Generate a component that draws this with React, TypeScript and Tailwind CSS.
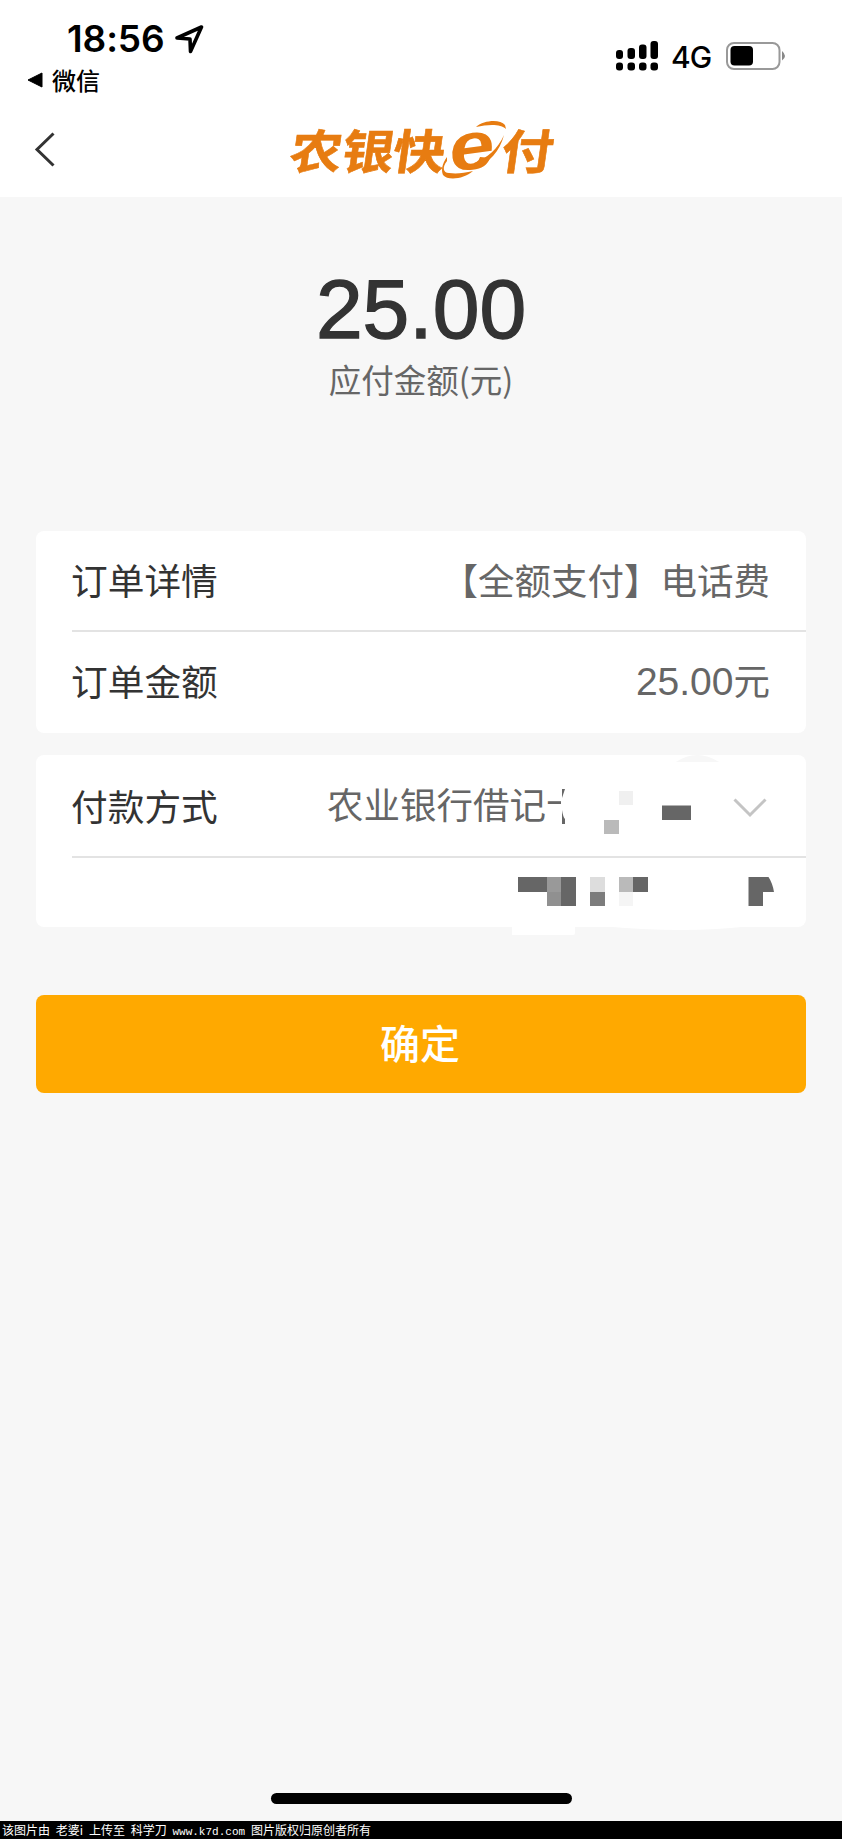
import React from 'react';

type RowProps = {
    label: string;
    children: React.ReactNode;
};

type Cell = [x: number, y: number, w: number, h: number, fill: string];

// Masked card number, coordinates relative to the payment card
const MASK_CELLS: Cell[] = [
    [583, 36, 14, 14, '#f0f0f0'],
    [568, 65, 15, 14, '#bababa'],
    [626, 50.5, 29, 14.5, '#666666'],
    [482, 122, 29, 15, '#666666'],
    [511, 122, 14, 15, '#999999'],
    [511, 137, 14, 14, '#909090'],
    [525, 122, 15, 29, '#666666'],
    [554, 122, 15, 15, '#dddddd'],
    [554, 137, 15, 14, '#7c7c7c'],
    [583, 122, 14, 15, '#bababa'],
    [597, 122, 15, 15, '#666666'],
    [583, 137, 14, 14, '#f5f5f5'],
];

const Row: React.FC<RowProps> = ({ label, children }) => (
    <div className="flex h-[99px] items-center justify-between pr-9 text-[36.5px] leading-none">
        <span className="pb-[2px] text-[36.7px] text-[#333]">{label}</span>
        {children}
    </div>
);

const StatusBar: React.FC = () => (
    <div className="flex h-[100px] justify-between">
        <div className="pl-[27px] pt-[20px]">
            <div className="flex items-center pl-[40px]">
                <span className="font-['Inter'] text-[37px] font-semibold leading-[38px] tracking-[-0.1px]">18:56</span>
                <svg width="29" height="29" viewBox="0 0 29 29" className="ml-[10px]" fill="none" stroke="#000" strokeWidth="3.6" strokeLinejoin="round">
                    <path d="M2 13 26.5 2 15.5 26.5 15 14Z" />
                </svg>
            </div>
            <div className="flex items-center gap-[9px] pt-[8px]">
                <svg width="16" height="16" viewBox="0 0 16 16">
                    <path d="M1 8 15 1v14Z" stroke="#000" strokeLinejoin="round" />
                </svg>
                <span className="text-[24px] font-medium leading-[28px]">微信</span>
            </div>
        </div>
        <div className="mt-[41px] flex h-[30px] pr-[56px]">
            <svg width="43" height="30" viewBox="0 0 43 30">
                <rect x="0" y="9" width="7" height="9" rx="3" />
                <rect x="11.5" y="7" width="7.5" height="11" rx="3" />
                <rect x="23" y="3.5" width="7.5" height="14.5" rx="3" />
                <rect x="34.5" y="0" width="7.5" height="18" rx="3" />
                <rect x="0" y="21.5" width="7" height="8" rx="3" />
                <rect x="11.5" y="21.5" width="7.5" height="8" rx="3" />
                <rect x="23" y="21.5" width="7.5" height="8" rx="3" />
                <rect x="34.5" y="21.5" width="7.5" height="8" rx="3" />
            </svg>
            <span className="ml-[12px] w-[42px] font-['Inter'] text-[30px] font-medium leading-[32px] tracking-[-1px]">4G</span>
            <svg width="60" height="30" viewBox="0 0 60 30" className="ml-[13px]">
                <rect x="1" y="2" width="52.5" height="26" rx="7" fill="none" stroke="#999" strokeWidth="2" />
                <rect x="4.5" y="5" width="22.5" height="19.5" rx="4" />
                <path d="M56 10q6 5 0 9.5Z" fill="#888" />
            </svg>
        </div>
    </div>
);

const Logo: React.FC = () => (
    <svg width="270" height="64" viewBox="0 0 270 64" fill="#e77c11" className="overflow-visible">
        <g transform="translate(0 49) skewX(-8) scale(1.04 0.94)" fontFamily="'Noto Sans CJK SC', sans-serif" fontWeight="700" fontSize="50" stroke="#e77c11" strokeWidth="0.6">
            <text x="2" y="0">农</text>
            <text x="52" y="0">银</text>
            <text x="101" y="0">快</text>
            <text x="205" y="0">付</text>
        </g>
        <text transform="translate(186 31) rotate(-8) scale(1.22 1)" x="0" y="18" textAnchor="middle" fontFamily="'Liberation Sans', sans-serif" fontWeight="700" fontStyle="italic" fontSize="67">e</text>
        {/* Orbit around the letter */}
        <path d="M190 7C198 0 214-1 219 5L220 9C215 4 203 4 190 7Z" />
        <path d="M218 15C214 31 203 43 189 49L188 43C201 38 212 29 218 15Z" />
        <path d="M161 41C156 47 157 53 163 53 171 54 178 53 187 51 178 59 162 61 157 55 155 50 156 44 161 37Z" />
    </svg>
);

const App: React.FC = () => {
    return (
        <div className="flex h-[1839px] w-[842px] flex-col bg-[#f7f7f7] font-['Noto_Sans_CJK_SC',sans-serif] text-black">
            <header className="h-[197px] bg-white">
                <StatusBar />
                <div className="grid h-[97px] grid-cols-[286px_1fr] pt-[20px]">
                    <svg width="22" height="36" viewBox="0 0 22 36" className="ml-[34px] mt-[12px]" fill="none" stroke="#333" strokeWidth="3">
                        <path d="M19.5 1.5 3 17.5 19.5 33.5" />
                    </svg>
                    <Logo />
                </div>
            </header>

            <main className="flex flex-1 flex-col px-9">
                {/* Amount */}
                <div className="flex h-[334px] flex-col items-center pt-[70px]">
                    <p className="font-['Liberation_Sans'] text-[84px] leading-[84px] text-[#333] [-webkit-text-stroke:1.4px_#333]">25.00</p>
                    <p className="pt-[8px] text-[32.5px] leading-[40px] text-[#666]">应付金额(元)</p>
                </div>

                {/* Order info */}
                <section className="h-[202px] rounded-lg bg-white pl-[35px]">
                    <Row label="订单详情">
                        <span className="text-[#666]">【全额支付】电话费</span>
                    </Row>
                    <div className="ml-px h-[2px] bg-[#e3e3e3]" />
                    <Row label="订单金额">
                        <span className="text-[#666]">
                            <span className="font-['Liberation_Sans'] text-[39px] leading-none">25.00</span>元
                        </span>
                    </Row>
                </section>

                {/* Payment method */}
                <section className="relative mt-[22px] h-[172px] rounded-lg bg-white pl-[35px]">
                    <div className="flex h-[101px] items-center text-[36.5px] leading-none">
                        <span className="w-[256px] pb-px text-[36.7px] text-[#333]">付款方式</span>
                        <span className="w-[258px] whitespace-nowrap pb-[2px] text-[#666]">农业银行借记卡</span>
                        <svg width="34" height="20" viewBox="0 0 34 20" className="ml-[148px] mt-[4px]" fill="none" stroke="#c4c4c4" strokeWidth="3">
                            <path d="M1.5 1.5 17 17 32.5 1.5" />
                        </svg>
                    </div>
                    <div className="ml-px h-[2px] bg-[#e3e3e3]" />
                    <svg width="770" height="182" viewBox="0 0 770 182" className="absolute left-0 top-0">
                        <rect x="525" y="24" width="36" height="60" fill="#fff" />
                        <path d="M526 34h3l-3 9ZM526 55q1 7 3 9v5h-3Z" fill="#666" />
                        <path d="M640 7Q661-7 683 7Z" fill="#f7f7f7" />
                        <path d="M476 170h63v8q0 2-2 2h-61Z" fill="#fff" />
                        <path d="M565 171Q650 179 714 171Z" fill="#fff" />
                        {MASK_CELLS.map(([x, y, w, h, fill]) => (
                            <rect key={`${x}-${y}`} x={x} y={y} width={w} height={h} fill={fill} />
                        ))}
                        <path d="M712.5 122h20q4 6 5.5 15h-11v14h-14.5Z" fill="#666" />
                    </svg>
                </section>

                <button className="mt-[68px] h-[98px] rounded-lg bg-[#ffa900] pb-[4px] pr-[2px] text-[40px] font-medium leading-none text-white">确定</button>

                {/* Home indicator */}
                <div className="mb-[17px] mt-auto h-[11px] w-[301px] self-center rounded-full bg-black" />
            </main>

            <footer className="h-[18px] whitespace-pre bg-black pl-[2px] text-[12px] leading-[17px] text-white [word-spacing:3.1px]">
                该图片由 老婆i 上传至 科学刀 <span className="font-['Liberation_Mono'] text-[11px]">www.k7d.com</span> 图片版权归原创者所有
            </footer>
        </div>
    );
};

export default App;
